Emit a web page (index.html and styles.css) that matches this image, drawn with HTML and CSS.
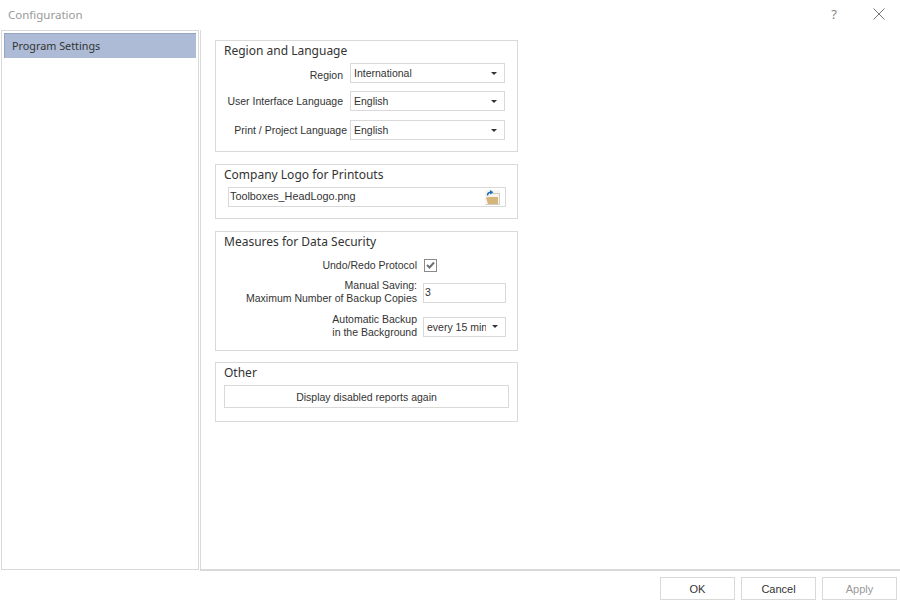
FILE: index.html
```html
<!DOCTYPE html>
<html lang="en">
<head>
    <meta charset="UTF-8">
    <title>Configuration</title>
    <link rel="stylesheet" href="styles.css">
</head>
<body>
    <div class="titlebar">
        <span class="title">Configuration</span>
        <span class="help">?</span>
        <svg class="close" width="12" height="12" viewBox="0 0 12 12"><path d="M0.5 0.5 L11.5 11.5 M11.5 0.5 L0.5 11.5" stroke="#777" stroke-width="1" fill="none"/></svg>
    </div>

    <div class="main">
        <div class="sidebar">
            <div class="nav-item">Program Settings</div>
        </div>
        <div class="panel">
            <!-- Region -->
            <div class="group group-region">
                <h2>Region and Language</h2>
                <div class="row row-region">
                    <label>Region</label>
                    <div class="combo"><span>International</span><i class="caret"></i></div>
                </div>
                <div class="row row-ui">
                    <label>User Interface Language</label>
                    <div class="combo"><span>English</span><i class="caret"></i></div>
                </div>
                <div class="row row-print">
                    <label class="tight">Print / Project Language</label>
                    <div class="combo"><span>English</span><i class="caret"></i></div>
                </div>
            </div>

            <!-- Logo -->
            <div class="group group-logo">
                <h2>Company Logo for Printouts</h2>
                <div class="file-field">
                    <span>Toolboxes_HeadLogo.png</span>
                    <svg width="15" height="15" viewBox="0 0 15 15">
                        <rect x="0" y="0" width="15" height="15" fill="#f8f5ee"/>
                        <path d="M6 3.5 H14.5 V14.5 H1" fill="none" stroke="#cfcbbf" stroke-width="1"/>
                        <path d="M1 7.5 L4 7 H13 V14 H3 Z" fill="#d5b57c"/>
                        <path d="M2.5 5.5 C2.5 3 4 2 6.5 2.2" fill="none" stroke="#1c6fb8" stroke-width="1.6"/>
                        <path d="M5 0 L8.5 2.3 L5 4.6 Z" fill="#1c6fb8"/>
                    </svg>
                </div>
            </div>

            <!-- Data security -->
            <div class="group group-security">
                <h2>Measures for Data Security</h2>
                <div class="sec-row sec-undo">
                    <label>Undo/Redo Protocol</label>
                    <div class="check">
                        <svg width="9" height="8" viewBox="0 0 9 8"><path d="M1 4 L3.5 6.5 L8 1.5" fill="none" stroke="#707070" stroke-width="2"/></svg>
                    </div>
                </div>
                <div class="sec-row sec-manual">
                    <label>Manual Saving:<br>Maximum Number of Backup Copies</label>
                    <div class="input"><span>3</span></div>
                </div>
                <div class="sec-row sec-auto">
                    <label>Automatic Backup<br>in the Background</label>
                    <div class="combo combo-small"><span>every 15 min</span><i class="caret"></i></div>
                </div>
            </div>

            <!-- Other -->
            <div class="group group-other">
                <h2>Other</h2>
                <div class="wide-btn">Display disabled reports again</div>
            </div>
        </div>
    </div>

    <div class="footer">
        <div class="btn">OK</div>
        <div class="btn">Cancel</div>
        <div class="btn disabled">Apply</div>
    </div>
</body>
</html>
```

FILE: styles.css
```css
* {
    margin: 0;
    padding: 0;
    box-sizing: border-box;
}

body {
    width: 900px;
    height: 604px;
    overflow: hidden;
    background: #fff;
    color: #333;
    font-family: "Liberation Sans", Arial, sans-serif;
    font-size: 10.5px;
    display: flex;
    flex-direction: column;
}

/* Title bar */
.titlebar {
    height: 30px;
    flex: none;
    display: flex;
    align-items: center;
    padding: 0 15px 1px 8px;
}

.title {
    font-family: "Noto Sans", sans-serif;
    font-size: 11.5px;
    color: #999;
    flex: 1;
}

.help {
    font-family: "Noto Sans", sans-serif;
    font-size: 13px;
    color: #888;
    margin: 0 36px 2px 0;
}

.close {
    margin-bottom: 1px;
}

/* Main area */
.main {
    height: 541px;
    flex: none;
    display: flex;
}

.sidebar {
    width: 198px;
    height: 540px;
    margin-left: 1px;
    border: 1px solid #d9d9d9;
    padding: 2px;
}

.nav-item {
    height: 25px;
    background: #adbbd6;
    border-top: 1px solid #98a5c0;
    border-left: 1px solid #98a5c0;
    padding-left: 7px;
    line-height: 23px;
    font-family: "Noto Sans", sans-serif;
    font-size: 10.8px;
}

.panel {
    flex: 1;
    margin-left: 1px;
    border-left: 1px solid #d9d9d9;
    border-bottom: 2px solid #d9d9d9;
    padding: 10px 0 0 14px;
}

/* Group boxes */
.group {
    width: 303px;
    border: 1px solid #d9d9d9;
    padding: 2px 8px 0;
    margin-bottom: 12px;
}

.group h2 {
    font-family: "Noto Sans", sans-serif;
    font-size: 12px;
    font-weight: normal;
    line-height: 16px;
}

.group-region { height: 112px; }
.group-logo { height: 55px; }
.group-security { height: 120px; margin-bottom: 11px; }
.group-other { height: 60px; }

/* Label + combo rows */
.row {
    display: flex;
    justify-content: flex-end;
    align-items: center;
    padding-right: 4px;
    height: 20px;
}

.row label {
    margin-right: 7px;
    white-space: nowrap;
}

.row label.tight {
    margin-right: 3px;
}

.row-region { margin-top: 4px; }
.row-region label { margin-top: 3px; }
.row-ui { margin-top: 8px; }
.row-print { margin-top: 9px; }

.combo {
    flex: none;
    width: 155px;
    height: 20px;
    border: 1px solid #d9d9d9;
    display: flex;
    align-items: center;
    padding: 0 7px 0 3px;
    overflow: hidden;
}

.combo span {
    flex: 1;
    overflow: hidden;
    white-space: nowrap;
}

.caret {
    flex: none;
    width: 0;
    height: 0;
    border-left: 3px solid transparent;
    border-right: 3px solid transparent;
    border-top: 3px solid #333;
}

.combo-small {
    width: 83px;
    margin-top: 2px;
}

.combo-small span {
    margin-right: 6px;
}

/* File picker */
.file-field {
    margin: 4px 3px 0 4px;
    height: 20px;
    border: 1px solid #d9d9d9;
    display: flex;
    align-items: center;
    justify-content: space-between;
    padding: 0 5px 0 1px;
    font-size: 10.8px;
}

.file-field span {
    margin-bottom: 2px;
}

/* Data security rows */
.sec-row {
    display: flex;
    justify-content: flex-end;
    align-items: center;
    padding-right: 3px;
}

.sec-row label {
    text-align: right;
    margin-right: 6px;
    line-height: 13px;
}

.sec-undo { margin-top: 7px; height: 16px; }
.sec-undo label { margin-right: 7px; }
.sec-manual { margin-top: 6px; height: 27px; }
.sec-manual label { margin-bottom: 2px; }
.sec-auto { margin-top: 6px; height: 27px; }

.check {
    width: 13px;
    height: 13px;
    margin-right: 69px;
    border: 1px solid #8a8a8a;
    display: flex;
    align-items: center;
    justify-content: center;
}

.input {
    width: 83px;
    height: 20px;
    border: 1px solid #d9d9d9;
    padding-left: 1px;
    line-height: 16px;
}

/* Buttons */
.wide-btn {
    height: 23px;
    border: 1px solid #d9d9d9;
    text-align: center;
    line-height: 22px;
    margin-top: 4px;
}

.footer {
    flex: 1;
    display: flex;
    justify-content: flex-end;
    gap: 6px;
    padding: 6px 3px 0 0;
}

.btn {
    width: 75px;
    height: 23px;
    border: 1px solid #d9d9d9;
    text-align: center;
    line-height: 23px;
    font-size: 11px;
}

.btn.disabled {
    color: #999;
}
```
